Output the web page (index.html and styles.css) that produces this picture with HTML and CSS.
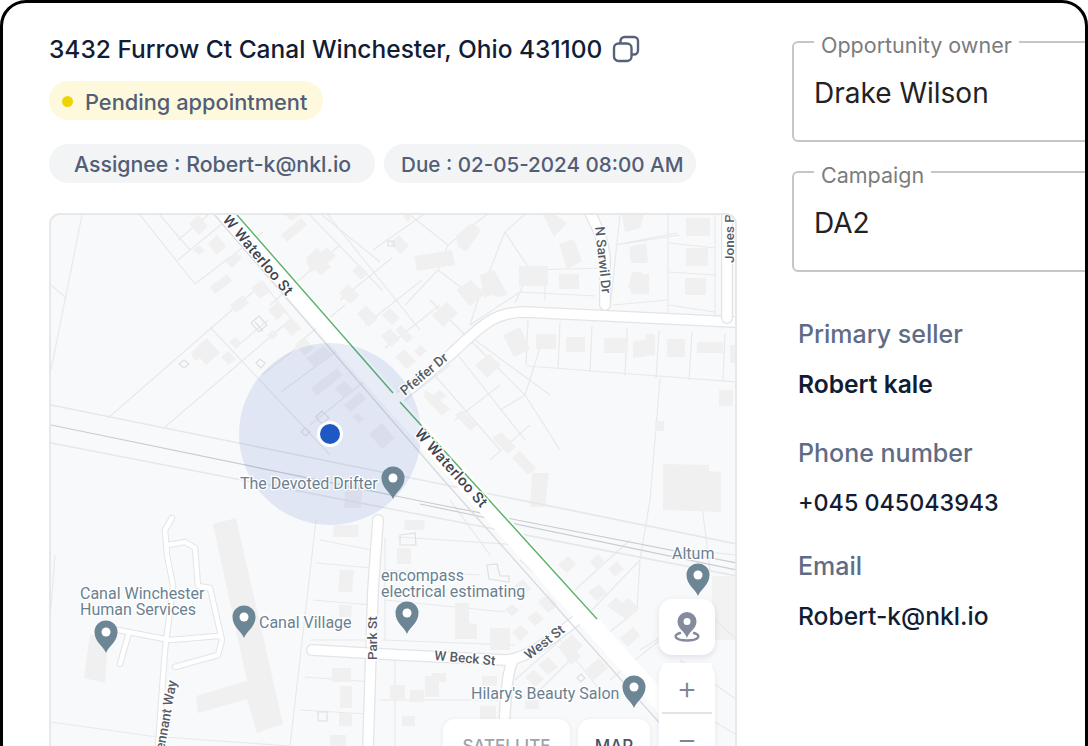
FILE: index.html
```html
<!DOCTYPE html>
<html lang="en">
<head>
    <meta charset="UTF-8">
    <meta name="viewport" content="width=device-width, initial-scale=1.0">
    <title>Opportunity details</title>
    <link rel="stylesheet" href="styles.css">
</head>
<body>
    <div class="card">
        <div class="left">
            <div class="address">
                <h1>3432 Furrow Ct Canal Winchester, Ohio 431100</h1>
                <svg class="copy-icon" viewBox="0 0 28 28" width="28" height="28">
                    <rect x="2" y="8.500" width="17.500" height="17.500" rx="4.500"/>
                    <path d="M8.500 8.500V6a4 4 0 0 1 4-4H22a4 4 0 0 1 4 4v9.500a4 4 0 0 1-4 4h-2.500"/>
                </svg>
            </div>
            <div class="status"><span class="dot"></span>Pending appointment</div>
            <div class="chips">
                <span class="chip chip-assignee">Assignee : Robert-k@nkl.io</span>
                <span class="chip chip-due">Due : 02-05-2024 08:00 AM</span>
            </div>

            <div class="map">
                <svg class="map-art" viewBox="51 215 684 538" width="684" height="538">
                    <defs>
                        <g id="pin">
                            <path d="M0 0C-2.500 -7 -11.500 -11 -11.500 -21A11.500 11.500 0 1 1 11.500 -21C11.500 -11 2.500 -7 0 0Z" fill="#6d8696"/>
                            <circle cx="0" cy="-21" r="4.500" fill="#fff"/>
                        </g>
                    </defs>

                    <!-- shaded block by the right edge -->
                    <path class="bld-soft" d="M712 576H737V640H712Z"/>

                    <!-- lot lines -->
                    <path class="lot" d="M82 215L51 370M51 285L65 297M140 215L195 284M178 260L223 223M195 284L263 232M160 215L190 250M208 215L178 240
                        M108 418L263 283L300 330M165 427L290 320M210 327L330 455M235 348L268 320M262 375L300 345M296 345L345 305M281 392L345 345M310 425L372 375
                        M328 215L420 330M270 305L340 245M310 215L382 290M373 250L430 210M340 300L392 258M365 325L422 280M385 348L440 305M322 215L380 262
                        M410 215L448 245L490 212M448 245L438 270L405 305M438 270L478 300L470 325M470 325L520 292M478 300L505 232M505 232L530 270L515 303M505 232L524 215
                        M520 292L595 296M545 270L545 300M530 270L604 268M430 300L490 360M475 340L550 395M544 335L525 395M525 395L500 410M490 360L525 395L560 450
                        M620 215L610 308M615 245L680 235M615 245L677 233M668 215L668 315M669 243L715 248M669 272L715 275M668 305L715 312M715 215L715 320M613 305L668 300
                        M528 320L526 365M527 366L737 382M560 322L558 368M592 326L590 372M627 328L625 376M659 330L656 378M692 332L689 380M725 334L723 380
                        M660 378L650 500M450 345L525 440M430 370L500 450M405 400L450 365M455 420L500 385M490 460L530 425M55 555L40 746M316 520L290 746M51 722L150 736L290 746
                        M320 540L372 550M316 563L372 568M313 600L372 605M310 640L372 640M305 677L372 682M300 710L368 714
                        M385 538L385 640M398 537L520 545M385 570L480 575M385 600L505 612M382 640L515 645M700 490L710 570M650 500L640 560
                        M450 500L490 555M395 650L395 746M520 560L620 650M575 590L630 540M590 612L640 560M640 560L637 610L600 640M640 650L680 625M610 680L660 640
                        M515 680L560 640L600 690M530 700L570 660M660 690L737 735M680 660L737 700M700 605L737 640M690 550L737 555M380 700L505 700M505 690L505 746"/>

                    <!-- buildings -->
                    <path class="bld" d="M189 224l9-9l10 11l-9 9zM208 244l9-9l9 11l-9 9zM193 250l6-5l6 5l-6 5zM226 262l10-10l6 6l-10 10zM210 287l17-13l5 7l-17 13z
                        M251 288l11-8l9 11l-11 8zM230 305l13-10l6 8l-13 10zM268 310l10-9l9 10l-10 9zM283 326l9-8l9 10l-9 8zM267 335l6-5l5 5l-6 5z
                        M191 353l10-10l6-5l13 15l-14 12l-6-7l-5 3zM229 342l6-5l7 6l-6 6zM221 357l7-6l8 8l-7 6zM295 345l9-8l10 11l-9 8zM306 358l18-12l8 8l-18 13z
                        M311 388l26-20l6 7l-26 21zM335 389l9-8l9 8l-9 9zM344 405l16-13l6 7l-16 13zM352 417l5-4l7 6l-5 4zM369 434l13-11l13 15l-13 11z
                        M281 235l20-17l6 7l-20 17zM306 258l11-10l4 4l6-5l9 9l-8 7l3 4l-10 8l-6-5l-5 3zM352 271l7-7l9 9l-7 7zM339 293l9-9l11 11l-9 9zM357 314l9-9l12 13l-9 9z
                        M382 315l8-7l10 10l-8 7zM381 336l9-8l10 11l-9 8zM390 243l9-8l10 11l-9 8zM403 215l10 0l-5 7zM285 215h14l-7 6zM395 330l6-5l12 13l-6 5z
                        M543 215l13 0l11 8l-13 14zM456 236l15-13l10 6l-4 7l-11 16l-8-6zM414 256l38-6l3 15l-38 6zM480 275l14-5l14 25l-10 2l-6-2l-8 3zM519 266h29v20h-29z
                        M456 290l15-10l14 14l-15 12zM559 274h20v15h-20zM559 244l15-5l8 22l-15 8zM432 315l15-13l11 11l-15 14zM503 335l17-8l10 22l-16 8zM475 365l14-11l12 11l-14 13z
                        M395 357l9-8l12 12l-9 8zM414 351l7-6l6 6l-7 6zM629 247l17-4l2 20h-17zM632 272h10v2h7v20h-18v-5l-3-1zM686 218h24v18h-24zM686 248h22v18h-22zM685 278h21v17h-21zM622 215h22l-4 13l-15 4z
                        M536 334h20v15h-20zM566 337h19v15h-19zM604 338h24v15h-24zM633 342l13-3v-5h9v21l-22 3zM667 339h18v18h-18zM697 342h26v11h-26zM730 345h7v18h-7z
                        M719 390h14v16h-14zM655 421h9v10h-9zM425 390l8 5l7-5l7 6l-7 4l10 9l-8 7l-18-19zM455 415l7-5l15 15l-7 6zM492 438l9-6l15 15l-8 7zM512 458l8-7l16 17l-8 7z
                        M663 464l46 1v6l12 1v40l-58-2zM532 473h17l-4 34h-15zM346 480h17l-2 28h-17zM334 525h25l-1 12h-25zM340 570h14l-2 22h-14zM339 605h13l-1 12h-12zM332 668h19v14h-19z
                        M340 686h12v22h-12zM339 713h13v13h-13zM330 735h16v11h-16zM558 565l10-9l8 8l-9 9zM590 562l8-8l8 9l-8 8zM608 569l9-8l7 8l-9 8zM588 592l11-8l8 9l-10 8z
                        M607 606l9-9l6 6l6-5l11 10l-12 12zM620 638l13-11l7 8l-12 12zM558 647l14-13l11 12l-6 5l4 5l-10 9zM538 665l10-8l10 10l-10 8zM585 670l14-12l9 10l-14 12z
                        M525 677l9-7l10 9l-9 8zM514 586l9-7l8 10l-9 7zM538 602l10-8l10 11l-10 8zM527 618l9-7l8 8l-9 7zM512 632l9-7l8 8l-9 8zM505 610l7-6l7 6l-7 6zM490 628h20v22h-20z
                        M455 603h14v20l8 1v15h-22zM405 520h20l-1 10h-20zM397 548h14v16h-14zM390 685h15v14h-15zM410 690h14v12h-14zM425 676h7v-3h14v9h-7v15h-14zM482 676h15v10h-15zM525 700h14v9h-14zM480 706h16v14h-16zM402 716h13v10h-13z
                        M213 524l23-6l47 206l-26 9l-10-34l-49 14l-2-17l51-15zM90 634l18 6l-3 43l-21-5z"/>
                    <path class="bld-line" d="M251 323l8-7l8 9l-8 7zM179 364l5-4l5 4l-5 4zM256 363l4-4l5 4l-4 5zM255 322l8 9M316 417l6-6l7 7l-7 6zM301 432l4-4l5 4l-4 4zM388 241h6v5h-6zM577 678l4-4l4 4l-4 4zM487 565l10-1l3 12h9v6l-20-3zM400 535l15-2l1 12h-16zM318 712h9v9h-9z"/>

                    <!-- rail corridor -->
                    <path class="corridor" d="M51 405L737 544M51 443L737 576"/>
                    <path class="rail" d="M51 425L430 503L737 563"/>
                    <path class="rail" d="M420 504L737 570"/>

                    <!-- roads -->
                    <path class="road-edge" d="M400 397L450 355C478 330 490 312 525 312L737 322"/>
                    <path class="road" d="M400 397L450 355C478 330 490 312 525 312L737 322"/>
                    <path class="road-edge" d="M590 213C600 232 605 245 605 265V305"/>
                    <path class="road" d="M590 213C600 232 605 245 605 265V305"/>
                    <path class="road-edge" d="M727 213V318"/>
                    <path class="road" d="M727 213V318"/>
                    <path class="road-edge thin" d="M172 518L165 530L167 555L173 586L165 650L158 746M168 545L185 542L195 548L198 586L210 588L222 640L218 655L175 667M118 630L170 640L218 636M128 636L120 664"/>
                    <path class="road thin" d="M172 518L165 530L167 555L173 586L165 650L158 746M168 545L185 542L195 548L198 586L210 588L222 640L218 655L175 667M118 630L170 640L218 636M128 636L120 664"/>
                    <path class="road-edge" d="M378 520L373 590L368 746"/>
                    <path class="road" d="M378 520L373 590L368 746"/>
                    <path class="road-edge" d="M312 650L400 655L505 660C525 660 550 640 577 620M512 662C505 680 505 720 503 746"/>
                    <path class="road" d="M312 650L400 655L505 660C525 660 550 640 577 620M512 662C505 680 505 720 503 746"/>
                    <path class="road-main" d="M225 213L700 746"/>
                    <path class="road-casing" d="M213 213L440 476L680 746"/>
                    <path class="traffic" d="M237 215L393 393M400 402L597 619"/>

                    <!-- location accuracy -->
                    <circle class="accuracy" cx="330" cy="434" r="91"/>
                    <circle class="you" cx="330" cy="434" r="11.500"/>

                    <!-- road names -->
                    <text class="street" transform="translate(222 220) rotate(50)">W Waterloo St</text>
                    <text class="street" transform="translate(414 434) rotate(48)">W Waterloo St</text>
                    <text class="street small" transform="translate(405 396) rotate(-40)">Pfeifer Dr</text>
                    <text class="street small" transform="translate(595 227) rotate(84)">N Sarwil Dr</text>
                    <text class="street small" transform="translate(734 263) rotate(-90)">Jones P</text>
                    <text class="street small" transform="translate(377 660) rotate(-90)">Park St</text>
                    <text class="street small" transform="translate(163 758) rotate(-80)">Tennant Way</text>
                    <text class="street small" transform="translate(529 660) rotate(-38)">West St</text>
                    <text class="street small" transform="translate(434 660) rotate(5)">W Beck St</text>

                    <!-- places -->
                    <use href="#pin" x="393" y="499"/>
                    <use href="#pin" x="106" y="653"/>
                    <use href="#pin" x="244" y="638"/>
                    <use href="#pin" x="407" y="634"/>
                    <use href="#pin" x="698" y="596"/>
                    <use href="#pin" x="634" y="708"/>
                    <text class="place" x="240" y="489">The Devoted Drifter</text>
                    <text class="place" x="80" y="599">Canal Winchester<tspan x="80" dy="16">Human Services</tspan></text>
                    <text class="place" x="259" y="628">Canal Village</text>
                    <text class="place" x="381" y="581">encompass<tspan x="381" dy="16">electrical estimating</tspan></text>
                    <text class="place" x="672" y="559">Altum</text>
                    <text class="place" x="471" y="699">Hilary's Beauty Salon</text>
                </svg>

                <button class="map-btn locate">
                    <svg viewBox="0 0 26 32" width="26" height="32">
                        <path d="M13 27C11.500 21 3.500 18 3.500 10.500A9.500 9.500 0 0 1 22.500 10.500C22.500 18 14.500 21 13 27Z" fill="#858b9d"/>
                        <circle cx="13" cy="10.500" r="3.500" fill="#fff"/>
                        <path d="M6 22C2.500 23 1 24.500 2 26.500C5 30.500 21 30.500 24 26.500C25 24.500 23.500 23 20 22" fill="none" stroke="#858b9d" stroke-width="2.400" stroke-linecap="round"/>
                    </svg>
                </button>
                <div class="zoom-box">
                    <button class="zoom-btn">+</button>
                    <button class="zoom-btn">&minus;</button>
                </div>
                <button class="map-type satellite">SATELLITE</button>
                <button class="map-type active">MAP</button>
            </div>
        </div>

        <div class="right">
            <fieldset class="field">
                <legend>Opportunity owner</legend>
                <div class="field-value">Drake Wilson</div>
            </fieldset>
            <fieldset class="field">
                <legend>Campaign</legend>
                <div class="field-value">DA2</div>
            </fieldset>

            <div class="info seller">
                <div class="info-label">Primary seller</div>
                <div class="info-value strong">Robert kale</div>
            </div>
            <div class="info phone">
                <div class="info-label">Phone number</div>
                <div class="info-value digits">+045 045043943</div>
            </div>
            <div class="info email">
                <div class="info-label">Email</div>
                <div class="info-value">Robert-k@nkl.io</div>
            </div>
        </div>
    </div>
</body>
</html>
```

FILE: styles.css
```css
html, body {
    margin: 0;
    padding: 0;
    height: 746px;
    overflow: hidden;
    background: #fff;
    font-family: Inter, "Noto Sans", sans-serif;
}

.card {
    box-sizing: border-box;
    width: 1088px;
    height: 780px;
    display: flex;
    gap: 55px;
    padding: 31px 0 0 46px;
    background: #fff;
    border: 3px solid #000;
    border-radius: 26px;
    overflow: hidden;
}

.left {
    flex: 0 0 688px;
}

.address {
    display: flex;
    align-items: center;
    gap: 10px;
    height: 30px;
}

h1 {
    margin: 0;
    font-size: 24.500px;
    font-weight: 500;
    color: #111c35;
    white-space: nowrap;
}

.copy-icon {
    fill: none;
    stroke: #566279;
    stroke-width: 2.400;
}

.status {
    display: inline-flex;
    align-items: center;
    height: 39px;
    margin-top: 17px;
    padding: 2px 16px 0 13px;
    box-sizing: border-box;
    border-radius: 20px;
    background: #fef9dc;
    color: #525e76;
    font-size: 21.800px;
    font-weight: 500;
}

.dot {
    width: 11px;
    height: 11px;
    margin-right: 12px;
    border-radius: 50%;
    background: #eed500;
}

.chips {
    display: flex;
    gap: 9px;
    margin-top: 24px;
}

.chip {
    display: flex;
    align-items: center;
    height: 39px;
    border-radius: 20px;
    background: #f3f4f5;
    color: #525e76;
    font-weight: 500;
    white-space: nowrap;
}

.chip-assignee {
    padding: 0 24px 0 25px;
    font-size: 21.300px;
}

.chip-due {
    padding: 2px 13px 0 17px;
    box-sizing: border-box;
    font-size: 20.600px;
}

.map {
    position: relative;
    width: 684px;
    height: 538px;
    margin-top: 30px;
    border: 2px solid #e7e8ea;
    border-radius: 11px;
    overflow: hidden;
    background: #f8f9fb;
}

.map-art {
    display: block;
}

.lot {
    fill: none;
    stroke: #e8e9eb;
    stroke-width: 1.200;
}

.bld {
    fill: #f0f0f1;
}

.bld-soft {
    fill: #f2f2f3;
}

.bld-line {
    fill: none;
    stroke: #dfe0e2;
    stroke-width: 1.200;
}

.corridor {
    fill: none;
    stroke: #e6e7e9;
    stroke-width: 1.600;
}

.rail {
    fill: none;
    stroke: #c9ccd1;
    stroke-width: 1.200;
}

.road-edge {
    fill: none;
    stroke: #e3e4e7;
    stroke-width: 12;
    stroke-linecap: round;
}

.road {
    fill: none;
    stroke: #fff;
    stroke-width: 9.500;
    stroke-linecap: round;
}

.road-edge.thin {
    stroke-width: 6.500;
    stroke-linejoin: round;
}

.road.thin {
    stroke-width: 4.500;
    stroke-linejoin: round;
}

.road-main {
    fill: none;
    stroke: #fff;
    stroke-width: 18;
}

.road-casing {
    fill: none;
    stroke: #d9dbde;
    stroke-width: 1.400;
}

.traffic {
    fill: none;
    stroke: #61b36f;
    stroke-width: 1.500;
}

.accuracy {
    fill: #2455b8;
    fill-opacity: 0.110;
}

.you {
    fill: #1f57c3;
    stroke: #fff;
    stroke-width: 3;
}

.street {
    font-family: Roboto, sans-serif;
    font-size: 15px;
    font-weight: 500;
    letter-spacing: 0.400px;
    fill: #40464f;
    stroke: #fff;
    stroke-width: 2.500px;
    paint-order: stroke;
}

.street.small {
    font-size: 13.500px;
    letter-spacing: 0;
    fill: #565c66;
}

.place {
    font-family: Roboto, sans-serif;
    font-size: 16px;
    fill: #6a8192;
    stroke: #fff;
    stroke-width: 2.500px;
    paint-order: stroke;
}

button {
    font-family: inherit;
    border: 0;
    padding: 0;
    background: #fff;
}

.map-btn {
    position: absolute;
    left: 608px;
    top: 384px;
    width: 56px;
    height: 56px;
    display: flex;
    align-items: center;
    justify-content: center;
    border-radius: 13px;
    box-shadow: 0 2px 6px rgba(30, 40, 60, 0.12);
}

.zoom-box {
    position: absolute;
    left: 608px;
    top: 448px;
    width: 56px;
    height: 110px;
    padding: 0 3px;
    box-sizing: border-box;
    border-radius: 13px;
    background: #fff;
    box-shadow: 0 2px 6px rgba(30, 40, 60, 0.08);
}

.zoom-btn {
    display: block;
    width: 100%;
    height: 50px;
    color: #7e8597;
    font-size: 32px;
    font-weight: 300;
    line-height: 50px;
}

.zoom-btn:first-child {
    height: 51px;
    padding-bottom: 9px;
    border-bottom: 2px solid #e3e4e8;
}

.map-type {
    position: absolute;
    top: 504px;
    height: 54px;
    border-radius: 12px;
    box-shadow: 0 1px 5px rgba(30, 40, 60, 0.08);
    font-size: 17px;
    font-weight: 500;
    line-height: 1;
}

.satellite {
    left: 392px;
    width: 127px;
    color: #9ca2af;
}

.active {
    left: 527px;
    width: 72px;
    color: #4b5468;
}

.right {
    flex: 0 0 320px;
    margin-top: -6px;
}

.field {
    box-sizing: border-box;
    width: 340px;
    height: 114px;
    margin: 0 0 16px;
    padding: 0 0 0 20px;
    border: 2px solid #c6c6c6;
    border-radius: 6px;
}

.field legend {
    margin-left: 0;
    padding: 6px 7px 0;
    color: #7c7c7c;
    font-size: 21.500px;
    line-height: 22px;
}

.field-value {
    margin-top: 17px;
    color: #222;
    font-size: 28px;
    line-height: 40px;
}

.info {
    margin-left: 6px;
}

.info.seller {
    margin-top: 48px;
}

.info.phone {
    margin-top: 41px;
}

.info.email {
    margin-top: 35px;
}

.info-label {
    color: #5e6c86;
    font-size: 25px;
    font-weight: 500;
    line-height: 28px;
}

.info-value {
    margin-top: 22px;
    color: #111c35;
    font-size: 24.600px;
    font-weight: 500;
    line-height: 28px;
}

.info-value.strong {
    font-weight: 600;
}

.info-value.digits {
    font-size: 23.300px;
}
```
